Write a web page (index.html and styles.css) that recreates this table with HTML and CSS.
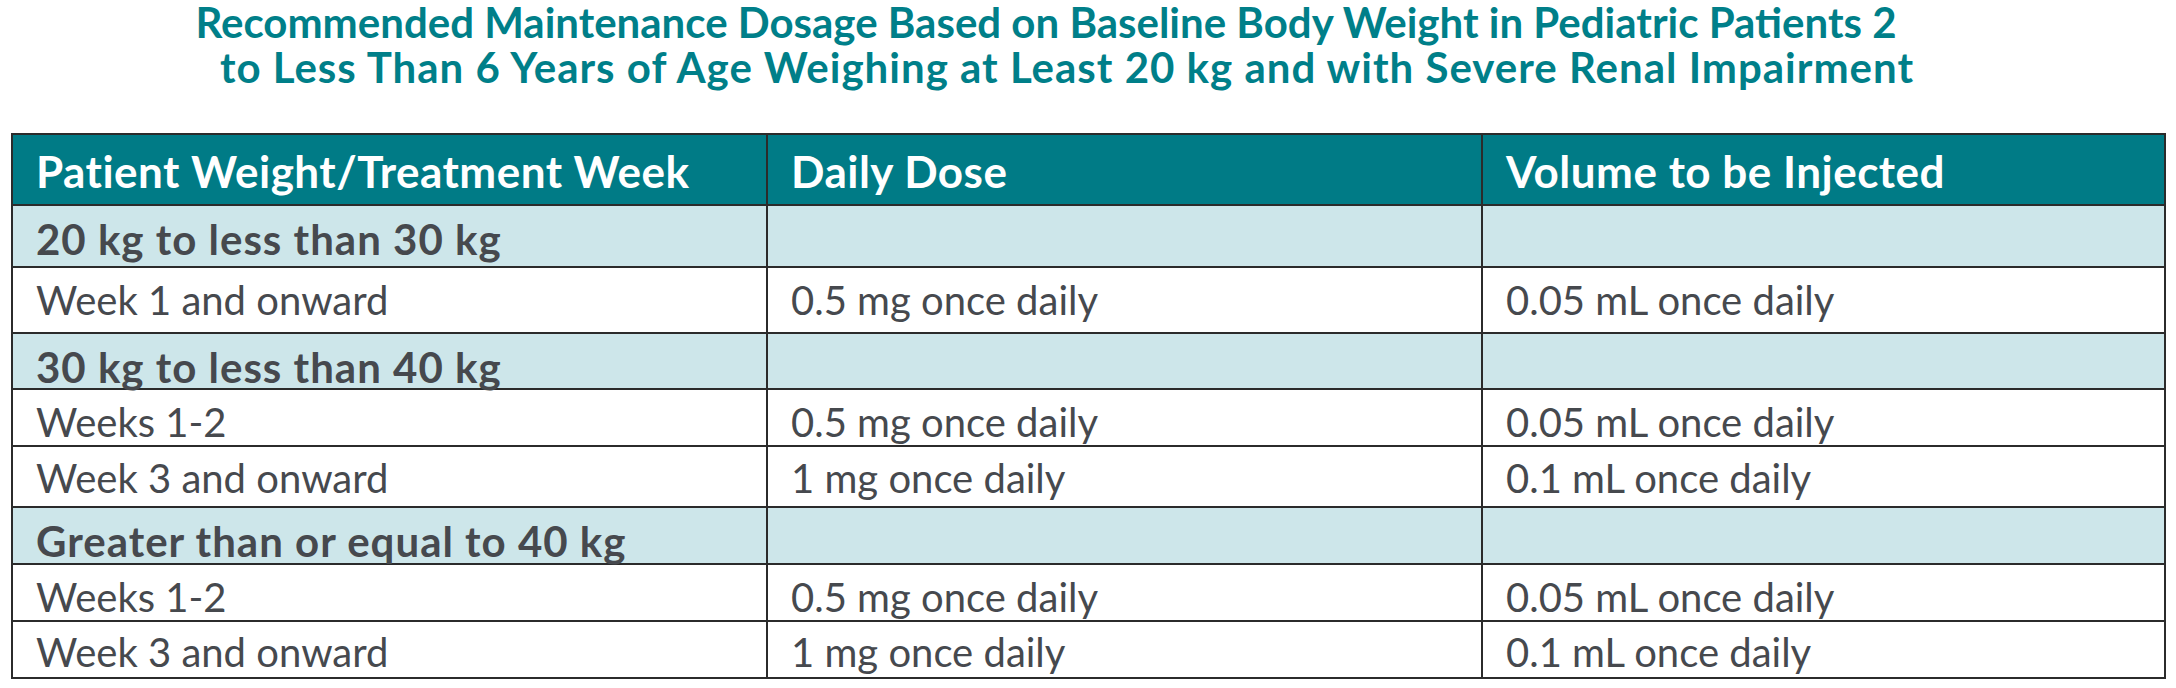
FILE: index.html
```html
<!DOCTYPE html>
<html lang="en">
<head>
<meta charset="utf-8">
<title>Recommended Maintenance Dosage</title>
<link rel="stylesheet" href="styles.css">
</head>
<body>
<h1 class="title"><span class="line line1">Recommended Maintenance Dosage Based on Baseline Body Weight in Pediatric Patients 2</span><span class="line line2">to Less Than 6 Years of Age Weighing at Least 20 kg and with Severe Renal Impairment</span></h1>
<table class="dose">
  <colgroup>
    <col class="c1"><col class="c2"><col class="c3">
  </colgroup>
  <thead>
    <tr class="head"><th>Patient Weight/Treatment Week</th><th>Daily Dose</th><th>Volume to be Injected</th></tr>
  </thead>
  <tbody>
    <tr class="group g1"><td>20 kg to less than 30 kg</td><td></td><td></td></tr>
    <tr class="row r1"><td>Week 1 and onward</td><td>0.5 mg once daily</td><td>0.05 mL once daily</td></tr>
    <tr class="group g2"><td>30 kg to less than 40 kg</td><td></td><td></td></tr>
    <tr class="row r2"><td>Weeks 1-2</td><td>0.5 mg once daily</td><td>0.05 mL once daily</td></tr>
    <tr class="row r3"><td>Week 3 and onward</td><td>1 mg once daily</td><td>0.1 mL once daily</td></tr>
    <tr class="group g3"><td>Greater than or equal to 40 kg</td><td></td><td></td></tr>
    <tr class="row r4"><td>Weeks 1-2</td><td>0.5 mg once daily</td><td>0.05 mL once daily</td></tr>
    <tr class="row r5"><td>Week 3 and onward</td><td>1 mg once daily</td><td>0.1 mL once daily</td></tr>
  </tbody>
</table>
</body>
</html>
```
FILE: styles.css
```css
html, body {
  margin: 0;
  padding: 0;
  background: #ffffff;
}
body {
  width: 2176px;
  height: 688px;
  overflow: hidden;
  font-family: Lato, "Liberation Sans", sans-serif;
}
.title {
  margin: 0;
  padding: 0 42px 0 0;
  height: 133px;
  box-sizing: border-box;
  text-align: center;
  font-family: Lato, "Liberation Sans", sans-serif;
  font-weight: 700;
  font-size: 42px;
  line-height: 45px;
  color: #007f89;
}
.line {
  display: block;
  white-space: nowrap;
}
.line1 {
  padding-right: 42px;
}
.line2 {
  letter-spacing: 1px;
}
.dose {
  margin-left: 11px;
  width: 2153px;
  border-collapse: collapse;
  table-layout: fixed;
  border: 2px solid #2b2b2b;
}
.c1 { width: 755px; }
.c2 { width: 715px; }
.c3 { width: 683px; }
.dose th, .dose td {
  border: 2px solid #2b2b2b;
  padding: 0 10px 0 23px;
  text-align: left;
  vertical-align: bottom;
  font-size: 40px;
  line-height: 40px;
  white-space: nowrap;
  color: #46494e;
}
.dose th {
  background: #007b86;
  color: #ffffff;
  font-weight: 700;
  font-size: 44px;
  letter-spacing: 0.5px;
}
.group td {
  background: #cde6ea;
  font-weight: 700;
  font-size: 42px;
  letter-spacing: 1px;
}
.row td {
  background: #ffffff;
  font-weight: 400;
}
.head { height: 71px; }
.head th { padding-bottom: 13px; }
.g1 { height: 62px; }
.g1 td { padding-bottom: 7px; }
.r1 { height: 66px; }
.r1 td { padding-bottom: 12px; }
.g2 { height: 56px; }
.g2 td { padding-bottom: 1px; }
.r2 { height: 57px; }
.r2 td { padding-bottom: 3px; }
.r3 { height: 61px; }
.r3 td { padding-bottom: 8px; }
.g3 { height: 57px; }
.g3 td { padding-bottom: 2px; }
.r4 { height: 57px; }
.r4 td { padding-bottom: 3px; }
.r5 { height: 57px; }
.r5 td { padding-bottom: 5px; }
```
